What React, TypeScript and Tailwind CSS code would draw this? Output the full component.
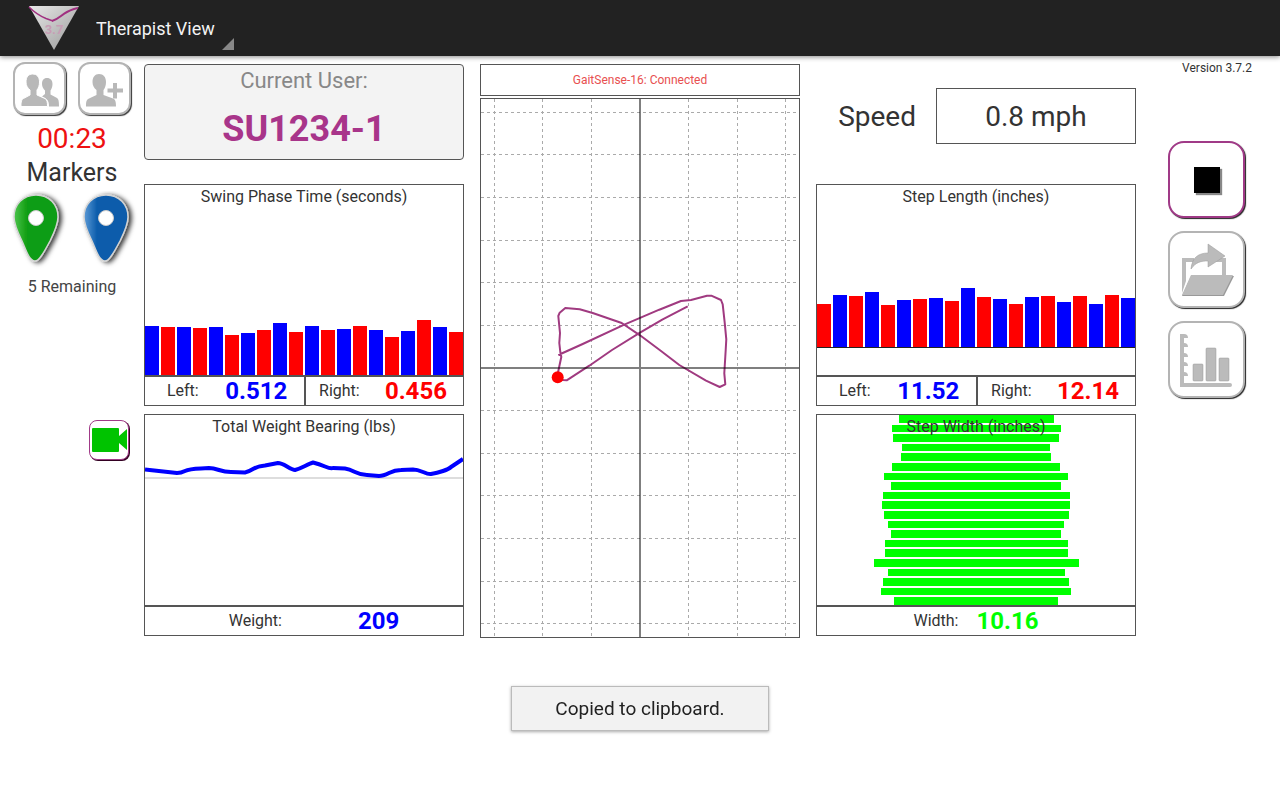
import React, { useState } from 'react';
import clsx from 'clsx';

type Side = 'left' | 'right';

const SWING_TIMES = [49, 48, 48, 47, 48, 40, 42, 45, 52, 43, 49, 45, 46, 49, 45, 38, 44, 55, 48, 43];
const STEP_LENGTHS = [43, 52, 51, 55, 42, 47, 48, 49, 46, 59, 50, 48, 43, 50, 51, 45, 51, 43, 52, 49];
const STEP_WIDTHS = [155, 169, 166, 148, 150, 168, 184, 170, 187, 188, 185, 176, 170, 183, 183, 205, 177, 186, 190, 164];

const WEIGHT_PATH =
    'M0 54.500L32 58Q36 58 40 56T56 53.500L64 53Q68 53 74 55T86 57L100 57.500Q103 57 108 54T120 50.500L133 48Q136 48 142 51.500T150 55Q154 54 160 51T168 47.500Q174 49 180 51.500T188 53L200 53.500Q204 54 210 57T222 60L234 61Q238 61 244 58T256 55L268 54.500Q272 54.500 278 57T286 59Q292 58 298 56T306 52L318 44';

const PRESSURE_PATH =
    'M206.7 207.3L181.7 220.3L159 233.7L131 251L108.3 266.7L85.7 281.3L82 281L76.7 278.3L77.3 272L80.3 258L79.3 253L78.3 244L79 234L77.3 217L78.7 213.7L84.3 209L98.7 210.3L111.7 214L140.7 224L159 236.3L178.7 251L198.3 266L225 281.7L238.7 288L244.3 285.3L243.3 274.3L244.7 251L245.3 240.3L243.7 223.7L241.7 205.3L240 201L230.3 196.7L226 196.7L210 201L200 202L178.3 210.7L143.3 225.7L101.7 245L77.3 256';

const GRID_X = [13, 61, 110, 207, 256, 304];
const GRID_Y = [13, 55, 98, 141, 183, 226, 311, 354, 396, 439, 482, 524];

interface IconButtonProps {
    label: string;
    size: 'sm' | 'lg';
    active?: boolean;
    children: React.ReactNode;
}

const IconButton: React.FC<IconButtonProps> = ({ label, size, active, children }) => (
    <button
        type="button"
        aria-label={label}
        className={clsx(
            'flex items-center justify-center border-2 bg-white',
            size === 'sm' && 'size-[53px] rounded-xl shadow-[1px_1px_1px_#333]',
            size === 'lg' && 'size-[77px] rounded-2xl shadow-[1px_1px_1px_#222]',
            active ? 'border-[#a03a87]' : 'border-[#b4b4b4]'
        )}
    >
        {children}
    </button>
);

const Panel: React.FC<{ title: string; footer: React.ReactNode; children: React.ReactNode }> = ({ title, footer, children }) => (
    <section className="border border-[#555]">
        <div className="relative h-[190px]">
            {children}
            <h2 className="absolute inset-x-0 top-0 text-center text-base leading-6 text-[#333]">{title}</h2>
        </div>
        <div className="h-[30px] border-t-2 border-[#555]">{footer}</div>
    </section>
);

const BarChart: React.FC<{ values: number[]; first: Side }> = ({ values, first }) => (
    <div className="flex items-end gap-[2px]">
        {values.map((value, i) => {
            const isLeft = (i % 2 === 0) === (first === 'left');
            return (
                <div
                    key={i}
                    className={clsx('flex-1', isLeft ? 'bg-[#00f]' : 'bg-[#f00]')}
                    style={{ height: value }}
                />
            );
        })}
    </div>
);

const LeftRight: React.FC<{ left: string; right: string }> = ({ left, right }) => (
    <dl className="grid h-full grid-cols-2 leading-7">
        <div className="grid grid-cols-[2fr_3fr] text-center">
            <dt className="pl-3">Left:</dt>
            <dd className="text-2xl leading-7 font-bold text-[#00f]">{left}</dd>
        </div>
        <div className="grid grid-cols-[2fr_3fr] border-l-2 border-[#555] text-center">
            <dt className="pl-1">Right:</dt>
            <dd className="text-2xl leading-7 font-bold text-[#f00]">{right}</dd>
        </div>
    </dl>
);

const Pin: React.FC<{ id: string; color: string; light: string }> = ({ id, color, light }) => (
    <svg width="58" height="78" viewBox="0 0 58 78" aria-hidden="true">
        <defs>
            <linearGradient id={id} x1="0" y1="0" x2="1" y2="0">
                <stop offset="0" stopColor={light} />
                <stop offset="0.3" stopColor={color} />
                <stop offset="1" stopColor={color} />
            </linearGradient>
            <filter id={`${id}-shadow`} x="-20%" y="-20%" width="150%" height="150%">
                <feDropShadow dx="3" dy="1" stdDeviation="2.5" floodColor="#000" floodOpacity="0.8" />
            </filter>
        </defs>
        <path
            d="M26 4C13 4 4 13.500 4 26C4 34 8 42 12 50C16 59 19 70 25 70C30 70 35 59 40 50C44 42 48 34 48 26C48 13.500 39 4 26 4Z"
            fill={`url(#${id})`}
            stroke="#d4d4d4"
            strokeWidth="1.500"
            filter={`url(#${id}-shadow)`}
        />
        <circle cx="26" cy="27" r="7.500" fill="#fff" stroke="#ccc" />
    </svg>
);

const Logo = () => (
    <svg width="52" height="46" viewBox="0 0 52 46" aria-hidden="true">
        <defs>
            <linearGradient id="logo" x1="0" y1="0" x2="1" y2="1">
                <stop offset="0" stopColor="#e8e8e8" />
                <stop offset="1" stopColor="#999" />
            </linearGradient>
        </defs>
        <path d="M1 1H51L26 45Z" fill="url(#logo)" />
        <text x="26" y="29" textAnchor="middle" fontSize="13" fontWeight="700" fill="#c79db5">
            3.7
        </text>
        <path d="M1 2C7 8 12 11 18 13.500L25 16" fill="none" stroke="#a03080" strokeWidth="1.500" />
        <path d="M24 16C31 14 33 10 39 7C43 5 46 3.500 50 3" fill="none" stroke="#a03080" strokeWidth="2" />
    </svg>
);

const PressureMap = () => (
    <svg className="block h-[538px] w-full" viewBox="0 0 318 538" preserveAspectRatio="none" role="img" aria-label="Center of pressure">
        <g stroke="#aaa" strokeDasharray="3 3" shapeRendering="crispEdges">
            {GRID_X.map((x) => (
                <line key={x} x1={x + 0.5} y1="0" x2={x + 0.5} y2="538" />
            ))}
            {GRID_Y.map((y) => (
                <line key={y} x1="0" y1={y + 0.5} x2="318" y2={y + 0.5} />
            ))}
        </g>
        <path d={PRESSURE_PATH} fill="none" stroke="#a03a80" strokeWidth="2" strokeLinejoin="round" />
        <path d="M159 0V538M0 269H318" stroke="#000" strokeOpacity="0.5" strokeWidth="2" />
        <circle cx="76.700" cy="278.300" r="6" fill="#f00" />
    </svg>
);

const LeftToolbar = () => (
    <aside className="flex w-36 flex-col pt-1.5">
        <div className="flex justify-center gap-3">
            <IconButton label="Select user" size="sm">
                <svg width="40" height="36" viewBox="0 -2 40 36" fill="#b8b8b8" aria-hidden="true">
                    <path d="M27 5C30.500 5 32.500 7.500 32.500 11C32.500 14 31.500 16 30.500 17.500V21.500L37 25C38.500 26 39 28 39 33.500H29C29 28 28 26.500 22 23.500L25 21V17.500C23.500 16 22 14 22 11C22 7.500 23.500 5 27 5Z" />
                    <path
                        d="M12.500 1C17 1 19.500 4 19.500 9C19.500 12.500 18.500 15 17 17V22L25 25.500C27 26.500 27.500 29 27.500 33.500H1C1 28.500 1.500 26.500 3.500 25.500L10 22V17C7.500 15 6 12.500 6 9C6 4 8.500 1 12.500 1Z"
                        stroke="#fff"
                    />
                </svg>
            </IconButton>
            <IconButton label="Add user" size="sm">
                <svg width="40" height="36" viewBox="0 -2 40 36" fill="#b8b8b8" aria-hidden="true">
                    <path d="M14 1C18.500 1 21 4 21 9C21 12.500 20 15 18.500 17V22L28 25.500C30.500 26.500 31 29 31 33.500H1C1 28.500 1.500 26.500 4 25.500L11.500 22V17C9 15 7.500 12.500 7.500 9C7.500 4 10 1 14 1Z" />
                    <path d="M28 10H32V15.500H38V19.500H32V25.500H28V19.500H22.500V15.500H28Z" />
                </svg>
            </IconButton>
        </div>
        <p className="mt-1.5 text-center text-[28px] leading-9 text-[#e11]">00:23</p>
        <h2 className="text-center text-[25px] leading-8 text-[#333]">Markers</h2>
        <div className="mt-0.5 flex justify-center gap-3 pl-1">
            <button type="button" aria-label="Green marker">
                <Pin id="pin-green" color="#0f9d12" light="#4cc44c" />
            </button>
            <button type="button" aria-label="Blue marker">
                <Pin id="pin-blue" color="#0a5cab" light="#5c9ad6" />
            </button>
        </div>
        <p className="mt-0.5 text-center text-base leading-8 text-[#444]">5 Remaining</p>
        <button
            type="button"
            aria-label="Record video"
            className="mt-[117px] mr-[15px] flex size-10 items-center self-end rounded-lg border border-[#a03a87] bg-white pl-0.5 shadow-[1px_1px_0_#302]"
        >
            <svg width="36" height="24" viewBox="0 0 36 24" fill="#00c300" aria-hidden="true">
                <path d="M1 0H26Q27 0 27 1V8L35 1V22L27 15V23Q27 24 26 24H1Q0 24 0 23V1Q0 0 1 0Z" />
            </svg>
        </button>
    </aside>
);

const RightToolbar = () => (
    <aside className="flex w-36 flex-col">
        <p className="pt-1 pr-7 text-right text-xs text-[#333]">Version 3.7.2</p>
        <div className="mt-[65px] flex flex-col items-center gap-[13px] pr-[3px]">
            <IconButton label="Stop session" size="lg" active>
                <span className="size-[26px] bg-black shadow-[2px_2px_1px_#888]" />
            </IconButton>
            <IconButton label="Export session" size="lg">
                <svg width="54" height="54" viewBox="0 0 54 54" fill="#bbb" aria-hidden="true">
                    <path d="M2 15H14V19H6V38L2 50Z" />
                    <path d="M38 15H46V32H42V19H36Z" />
                    <path d="M11 33H54L44 53H2Z" fill="#999" />
                    <path d="M11 32H53L43 52H2Z" />
                    <path d="M11 26C12 14 19 10 28 10V1L45 13L28 24V18C21 18 16 19 11 26Z" stroke="#999" strokeWidth="0.500" />
                </svg>
            </IconButton>
            <IconButton label="Reports" size="lg">
                <svg width="54" height="54" viewBox="0 0 54 54" fill="#bbb" aria-hidden="true">
                    <path d="M0 1H4Q8 1 8 5H4V10Q8 10 8 14H4V20Q8 20 8 24H4V29Q8 29 8 33H4V39Q8 39 8 43H4V50H50Q52 50 52 52T50 54H0Z" />
                    <rect x="13" y="31" width="10" height="17" rx="1" stroke="#999" strokeWidth="0.500" />
                    <rect x="26" y="15" width="10" height="33" rx="1" stroke="#999" strokeWidth="0.500" />
                    <rect x="39" y="25" width="10" height="23" rx="1" stroke="#999" strokeWidth="0.500" />
                </svg>
            </IconButton>
        </div>
    </aside>
);

const App: React.FC = () => {
    const [view, setView] = useState('therapist');

    return (
        <div className="min-h-screen bg-white font-['Roboto','Liberation_Sans',sans-serif] text-base text-[#333]">
            <header className="relative flex h-14 items-center bg-[#222] pl-7 shadow-[0_1px_5px_#888]">
                <Logo />
                <div className="relative ml-1 h-11">
                    <select
                        aria-label="View"
                        value={view}
                        onChange={(e) => setView(e.target.value)}
                        className="h-full w-[150px] appearance-none bg-transparent pt-0.5 pl-3 text-lg text-[#f3f3f3]"
                    >
                        <option value="therapist">Therapist View</option>
                        <option value="patient">Patient View</option>
                    </select>
                    <svg className="pointer-events-none absolute right-0 bottom-0" width="12" height="12" viewBox="0 0 12 12" aria-hidden="true">
                        <path d="M12 0V12H0Z" fill="#888" />
                    </svg>
                </div>
            </header>

            <main className="flex">
                <LeftToolbar />

                <div className="grid flex-1 grid-cols-3 gap-4 pt-2">
                    <div>
                        <section className="h-24 rounded border border-[#555] bg-[#f3f3f3] text-center">
                            <h1 className="text-[22px] leading-8 text-[#888]">Current User:</h1>
                            <p className="text-4xl leading-[64px] font-bold text-[#a8358a]">SU1234-1</p>
                        </section>
                        <div className="mt-6 flex flex-col gap-2">
                            <Panel title="Swing Phase Time (seconds)" footer={<LeftRight left="0.512" right="0.456" />}>
                                <div className="flex h-full flex-col justify-end">
                                    <BarChart values={SWING_TIMES} first="left" />
                                </div>
                            </Panel>
                            <Panel
                                title="Total Weight Bearing (lbs)"
                                footer={
                                    <dl className="flex justify-center gap-[76px] pl-5 leading-7">
                                        <dt>Weight:</dt>
                                        <dd className="text-2xl leading-7 font-bold text-[#00f]">209</dd>
                                    </dl>
                                }
                            >
                                <svg className="block h-full w-full" viewBox="0 0 318 190" preserveAspectRatio="none" role="img" aria-label="Weight over time">
                                    <path d="M0 63H318" stroke="#ddd" strokeWidth="2" />
                                    <path d={WEIGHT_PATH} fill="none" stroke="#00f" strokeWidth="4" strokeLinejoin="round" />
                                </svg>
                            </Panel>
                        </div>
                    </div>

                    <div className="flex flex-col gap-0.5">
                        <p className="border border-[#555] text-center text-xs leading-[30px] text-[#e85050]">GaitSense-16: Connected</p>
                        <div className="border border-[#555]">
                            <PressureMap />
                        </div>
                    </div>

                    <div>
                        <div className="flex h-24 items-center justify-end gap-5 pt-2 text-[28px]">
                            <span id="speed-label" className="pt-0.5">Speed</span>
                            <output
                                aria-labelledby="speed-label"
                                className="w-[200px] border border-[#555] pt-0.5 text-center leading-[52px]"
                            >
                                0.8 mph
                            </output>
                        </div>
                        <div className="mt-6 flex flex-col gap-2">
                            <Panel title="Step Length (inches)" footer={<LeftRight left="11.52" right="12.14" />}>
                                <div className="flex h-full flex-col justify-end pb-[27px]">
                                    <BarChart values={STEP_LENGTHS} first="right" />
                                    <div className="h-px bg-[#222]" />
                                </div>
                            </Panel>
                            <Panel
                                title="Step Width (inches)"
                                footer={
                                    <dl className="flex justify-center gap-[18px] leading-7">
                                        <dt>Width:</dt>
                                        <dd className="text-2xl leading-7 font-bold text-[#0f0]">10.16</dd>
                                    </dl>
                                }
                            >
                                <div className="flex h-full flex-col items-center gap-[2px]">
                                    {STEP_WIDTHS.map((width, i) => (
                                        <div key={i} className="flex-1 bg-[#0f0]" style={{ width: `${(width / 318) * 100}%` }} />
                                    ))}
                                </div>
                            </Panel>
                        </div>
                    </div>
                </div>

                <RightToolbar />
            </main>

            <div className="pointer-events-none fixed inset-x-0 bottom-[69px] flex justify-center">
                <p role="status" className="border border-[#bbb] bg-[#f2f2f2] px-[43px] text-[19px] leading-[43px] text-[#222] shadow-[0_1px_3px_#aaa]">
                    Copied to clipboard.
                </p>
            </div>
        </div>
    );
};

export default App;
